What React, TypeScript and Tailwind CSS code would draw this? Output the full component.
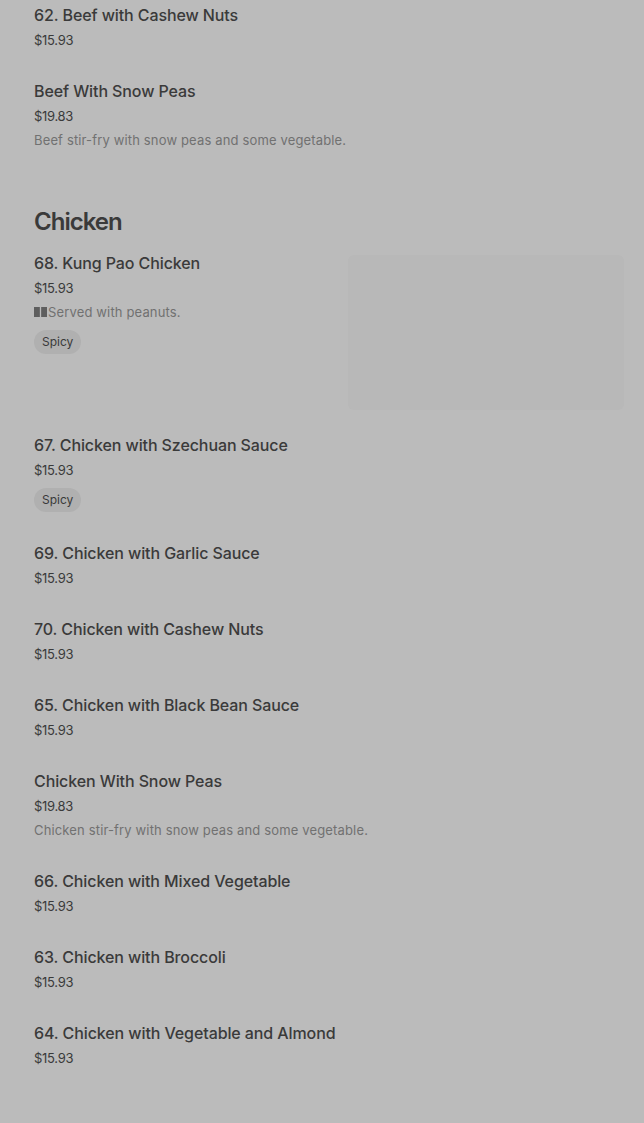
import React from 'react';

type Item = { name: string; price: string; desc?: string; tag?: string; image?: boolean; leaf?: boolean };

const beef: Item[] = [
  { name: '62. Beef with Cashew Nuts', price: '$15.93' },
  { name: 'Beef With Snow Peas', price: '$19.83', desc: 'Beef stir-fry with snow peas and some vegetable.' },
];

const chicken: Item[] = [
  { name: '68. Kung Pao Chicken', price: '$15.93', desc: 'Served with peanuts.', tag: 'Spicy', image: true, leaf: true },
  { name: '67. Chicken with Szechuan Sauce', price: '$15.93', tag: 'Spicy' },
  { name: '69. Chicken with Garlic Sauce', price: '$15.93' },
  { name: '70. Chicken with Cashew Nuts', price: '$15.93' },
  { name: '65. Chicken with Black Bean Sauce', price: '$15.93' },
  { name: 'Chicken With Snow Peas', price: '$19.83', desc: 'Chicken stir-fry with snow peas and some vegetable.' },
  { name: '66. Chicken with Mixed Vegetable', price: '$15.93' },
  { name: '63. Chicken with Broccoli', price: '$15.93' },
  { name: '64. Chicken with Vegetable and Almond', price: '$15.93' },
];

const MenuRow: React.FC<{ item: Item }> = ({ item }) => (
  <div className={`flex justify-between ${item.image ? 'pb-[23px]' : 'pb-[29px]'}`}>
    <div className="min-w-0">
      <p className="text-[16px] font-medium leading-6 tracking-[-0.1px] text-[#3a3a3a]">{item.name}</p>
      <p className="mt-[3px] text-[13px] leading-5 tracking-[-0.3px] text-[#3a3a3a]">{item.price}</p>
      {item.desc && (
        <p className="mt-[4px] text-[13px] leading-5 tracking-[0.15px] text-[#717171]">
          {item.leaf && <span className="mr-[1px] inline-block h-[10px] w-[13px] bg-[#5e5e5e] [clip-path:polygon(0_0,45%_0,45%_100%,55%_100%,55%_0,100%_0,100%_100%,0_100%)]" />}
          {item.desc}
        </p>
      )}
      {item.tag && (
        <span className="mt-[8px] inline-flex h-6 items-center rounded-full bg-[#b0b0b0] px-2 text-[12px] text-[#3a3a3a]">{item.tag}</span>
      )}
    </div>
    {item.image && <div className="mt-[4px] mr-[20px] h-[155px] w-[276px] shrink-0 rounded-md bg-[#b8b8b8]" />}
  </div>
);

export default function App() {
  return (
    <div className="min-h-[1123px] bg-[#bbbbbb] pl-[34px] pt-[3px] font-['Inter','Noto_Sans',sans-serif]">
      {beef.map((item) => <MenuRow key={item.name} item={item} />)}
      <h2 className="-mt-[3px] mb-[13px] pt-[30px] text-[24px] font-semibold leading-8 tracking-[-1px] text-[#3a3a3a]">Chicken</h2>
      {chicken.map((item) => <MenuRow key={item.name} item={item} />)}
    </div>
  );
}
